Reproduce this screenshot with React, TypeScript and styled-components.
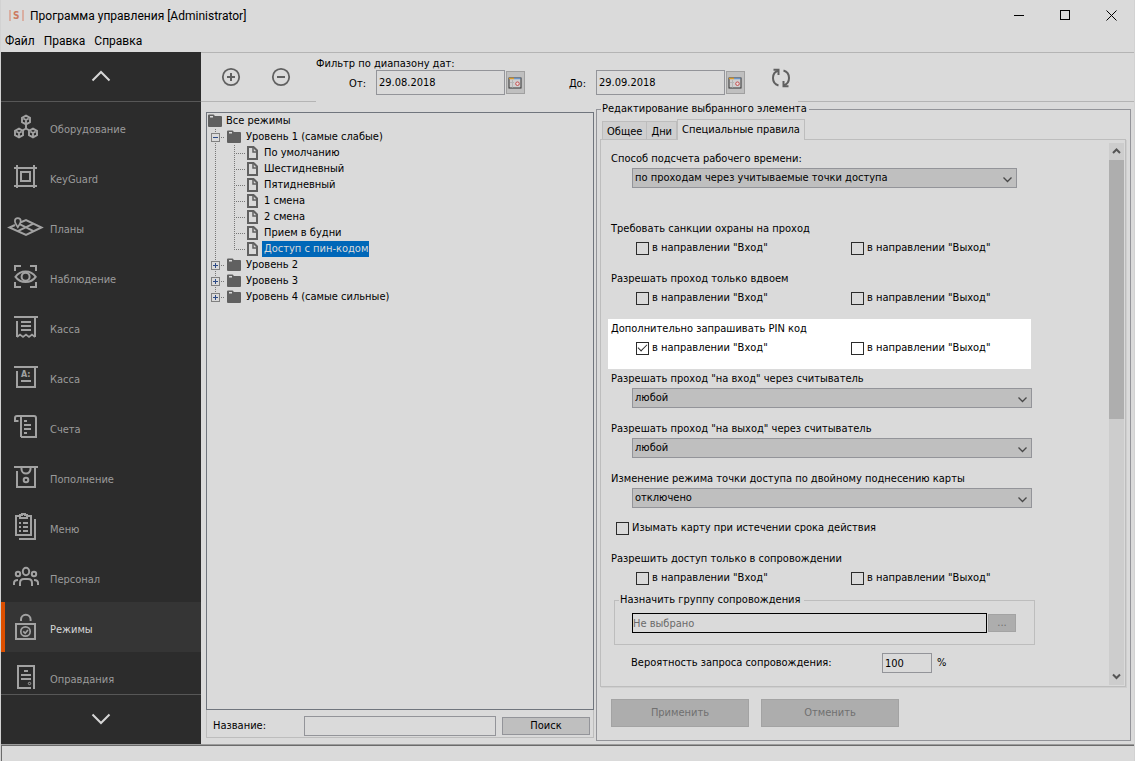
import React, { useState } from 'react';
import styled, { createGlobalStyle, css } from 'styled-components';

const color = {
  face: '#dadada',
  control: '#bfbfbf',
  disabled: '#adadad',
  line: '#b4b4b4',
  softLine: '#bdbdbd',
  frame: '#939499',
  icon: '#606060',
  side: '#2c2c2c',
  sideIcon: '#a2a2a2',
};

const GlobalStyle = createGlobalStyle`
  *, *::before, *::after { box-sizing: border-box; }
  body { margin: 0; background: ${color.face}; }
  body, button, input, select {
    font-family: "DejaVu Sans Condensed", Tahoma, sans-serif;
    font-size: 11px;
    line-height: 14px;
    color: #000;
  }
  button, input, select { border-radius: 0; margin: 0; }
`;

const Window = styled.div`
  display: flex;
  flex-direction: column;
  min-height: 100vh;
  background: ${color.face};
  border-left: 1px solid #d2d2d2;
  border-right: 1px solid #d2d2d2;
`;

/* ---------- title and menu ---------- */

const TitleBar = styled.header`
  display: flex;
  align-items: center;
  height: 31px;
  padding-left: 8px;
`;

const TitleText = styled.h1`
  flex: 1;
  margin: 0 0 0 6px;
  font: 400 12px/16px Roboto, sans-serif;
`;

const WindowButton = styled.button`
  width: 46px;
  height: 30px;
  padding: 0;
  border: 0;
  background: none;
  display: flex;
  align-items: center;
  justify-content: center;
`;

const MenuBar = styled.nav`
  display: flex;
  gap: 9px;
  height: 21px;
  padding: 3px 4px 4px;
`;

const MenuButton = styled.button`
  padding: 0;
  border: 0;
  background: none;
  font: 400 12px/14px Roboto, sans-serif;
`;

/* ---------- sidebar ---------- */

const Body = styled.div`
  flex: 1;
  display: flex;
`;

const Sidebar = styled.aside`
  width: 200px;
  flex: none;
  display: flex;
  flex-direction: column;
  background: ${color.side};
`;

const ScrollStep = styled.button<{ $edge: 'top' | 'bottom' }>`
  height: 50px;
  flex: none;
  padding: 0 1px 1px 0;
  border: 0 solid #575757;
  ${(p) => (p.$edge === 'top' ? 'border-bottom-width: 1px;' : 'border-top-width: 1px;')}
  background: none;
  display: flex;
  align-items: center;
  justify-content: center;
`;

const SideList = styled.ul`
  flex: 1 1 0;
  min-height: 0;
  overflow: hidden;
  margin: 0;
  padding: 0;
  list-style: none;
`;

const SideLink = styled.a<{ $active: boolean }>`
  display: flex;
  align-items: center;
  gap: 8px;
  height: 50px;
  padding: 2px 0 0 5px;
  border-left: 4px solid ${(p) => (p.$active ? '#dc4f00' : 'transparent')};
  background: ${(p) => (p.$active ? '#353535' : 'transparent')};
  color: ${(p) => (p.$active ? '#d6d6d6' : '#9b9b9b')};
  text-decoration: none;

  svg {
    flex: none;
    overflow: visible;
    fill: none;
    stroke: ${color.sideIcon};
    stroke-width: 2;
  }
  span { padding-top: 4px; }
`;

/* ---------- toolbar ---------- */

const Main = styled.main`
  flex: 1;
  min-width: 0;
  display: flex;
  flex-direction: column;
  border-top: 1px solid ${color.line};
`;

const Toolbar = styled.div`
  display: flex;
  height: 49px;
`;

const ToolGroup = styled.div<{ $grow?: boolean }>`
  display: flex;
  align-items: center;
  gap: 20px;
  padding-left: 15px;
  width: 115px;
  border-bottom: 1px solid ${color.line};
  ${(p) => p.$grow && css`flex: 1;`}
`;

const IconButton = styled.button`
  padding: 0;
  width: 30px;
  height: 30px;
  border: 0;
  background: none;
  display: flex;
  align-items: center;
  justify-content: center;
`;

const RefreshButton = styled(IconButton)`
  align-self: center;
`;

const DateFilter = styled.div`
  display: flex;
  width: 482px;
  gap: 21px;
`;

const DateFields = styled.div`
  display: grid;
  grid-template-columns: 60px 149px 71px 149px;
  grid-template-rows: 13px 25px;
  padding-top: 4px;
`;

const FilterTitle = styled.div`
  grid-column: 1 / -1;
  line-height: 13px;
`;

const DateLabel = styled.label`
  justify-self: end;
  align-self: center;
  padding: 2px 10px 0 0;
`;

const DateBox = styled.div`
  display: flex;
  align-items: center;
  gap: 1px;
`;

const DateInput = styled.input`
  flex: 1;
  min-width: 0;
  height: 25px;
  padding: 0 2px;
  border: 1px solid ${color.frame};
  background: ${color.face};
`;

const CalendarButton = styled.button`
  width: 19px;
  height: 23px;
  padding: 0 0 0 1px;
  border: 1px solid #a0a0a0;
  background: ${color.control};
  display: flex;
  align-items: center;
`;

/* ---------- tree ---------- */

const Columns = styled.div`
  flex: 1;
  display: flex;
  gap: 2px;
  padding: 0 3px 3px 5px;
`;

const TreeColumn = styled.section`
  width: 388px;
  flex: none;
  display: flex;
  flex-direction: column;
  padding: 10px 0 3px;
`;

const Tree = styled.div`
  flex: 1;
  border: 1px solid #70757d;
  padding: 0 1px;
`;

const TreeRow = styled.div`
  display: flex;
  align-items: center;
  height: 16px;

  svg { flex: none; }
`;

const TreeText = styled.span<{ $level: number; $selected?: boolean }>`
  height: 16px;
  line-height: 16px;
  margin-left: ${(p) => p.$level + 2}px;
  padding: 0 1px 0 2px;
  ${(p) => p.$selected && css`
    background: #0067b8;
    color: #dadada;
  `}
`;

const SearchBar = styled.form`
  display: flex;
  align-items: center;
  height: 28px;
  padding: 4px 3px 0 6px;
  border: 1px solid ${color.softLine};
  border-top: 0;
`;

const SearchLabel = styled.label`
  width: 91px;
`;

const SearchInput = styled.input`
  flex: 1;
  min-width: 0;
  height: 20px;
  margin-right: 6px;
  border: 1px solid ${color.frame};
  background: ${color.face};
`;

const SearchButton = styled.button`
  width: 88px;
  height: 18px;
  padding: 0;
  border: 1px solid ${color.frame};
  background: ${color.control};
`;

/* ---------- editor ---------- */

const Editor = styled.fieldset`
  flex: 1;
  min-width: 0;
  margin: 0;
  padding: 3px 3px 13px;
  border: 1px solid ${color.frame};
  display: flex;
  flex-direction: column;

  > legend {
    margin-left: 1px;
    padding: 0 2px 0 1px;
  }
`;

const Tabs = styled.div`
  display: flex;
  align-items: flex-end;
  height: 20px;
  padding-left: 2px;
`;

const Tab = styled.button<{ $active: boolean }>`
  height: 18px;
  padding: 2px 4px 0;
  border: 1px solid ${color.softLine};
  border-bottom: 0;
  background: #cfcfcf;
  & + & { border-left: 0; }
  ${(p) => p.$active && css`
    height: 21px;
    margin-bottom: -1px;
    padding: 0 4px 1px;
    background: ${color.face};
    position: relative;
    && { border-left: 1px solid ${color.softLine}; }
  `}
`;

const TabPanel = styled.div`
  flex: 1;
  display: flex;
  margin-right: 1px;
  border: 1px solid ${color.softLine};
  box-shadow: 1px 1px 0 #cecece;
`;

const Form = styled.div`
  flex: 1;
  min-width: 0;
  padding: 9px 77px 13px 7px;
`;

const Rule = styled.section<{ $lit?: boolean; $space?: number }>`
  padding: 0 0 11px 3px;
  margin: 0 ${(p) => (p.$lit ? 1 : 0)}px ${(p) => p.$space ?? 0}px 0;
  background: ${(p) => (p.$lit ? '#fff' : 'transparent')};
`;

const RuleTitle = styled.div`
  height: 19px;
  line-height: 19px;
`;

const Checks = styled.div`
  display: grid;
  grid-template-columns: 215px 1fr;
  padding-left: 25px;
`;

const CheckLabel = styled.label`
  display: flex;
  align-items: center;
  gap: 3px;
  height: 20px;
`;

const CheckInput = styled.input<{ $lit?: boolean }>`
  appearance: none;
  flex: none;
  width: 13px;
  height: 13px;
  border: 1px solid #2b2b2b;
  background: ${(p) => (p.$lit ? '#fff' : color.face)};
  display: grid;
  place-items: center;

  &:checked::before {
    content: '';
    width: 9px;
    height: 5px;
    margin-bottom: 3px;
    border: solid #2b2b2b;
    border-width: 0 0 1px 1px;
    transform: rotate(-45deg);
  }
`;

const SelectBox = styled.div<{ $short?: boolean }>`
  position: relative;
  margin: 0 ${(p) => (p.$short ? 15 : 0)}px 0 21px;

  svg {
    position: absolute;
    right: 5px;
    top: 9px;
    pointer-events: none;
  }
`;

const Select = styled.select`
  appearance: none;
  display: block;
  width: 100%;
  height: 20px;
  padding: 0 20px 0 2px;
  border: 1px solid ${color.frame};
  background: ${color.control};
`;

const SingleCheck = styled.div`
  height: 30px;
  padding-left: 8px;

  label { height: 18px; }
`;

const EscortGroup = styled.fieldset`
  display: flex;
  min-width: 0;
  margin: 0 -3px 8px 6px;
  padding: 6px 18px 11px 17px;
  border: 1px solid ${color.softLine};
  gap: 1px;
  align-items: center;

  > legend {
    margin-left: -13px;
    padding: 0 3px 0 1px;
  }
`;

const EscortInput = styled.input`
  flex: 1;
  min-width: 0;
  height: 20px;
  padding: 0;
  border: 1px solid #000;
  background: ${color.face};
  color: #6a6a6a;
`;

const DisabledButton = styled.button<{ $small?: boolean }>`
  width: ${(p) => (p.$small ? 28 : 138)}px;
  height: ${(p) => (p.$small ? 18 : 28)}px;
  flex: none;
  padding: 0;
  border: 1px solid #a3a3a3;
  background: ${color.disabled};
  color: #707070;
`;

const Probability = styled.div`
  display: flex;
  align-items: center;
  padding-left: 23px;

  label { width: 251px; }
`;

const NumberInput = styled.input`
  width: 50px;
  height: 20px;
  padding: 0 2px;
  margin-right: 5px;
  border: 1px solid ${color.frame};
  background: ${color.face};
`;

const ScrollBar = styled.div`
  width: 15px;
  margin: 3px 1px 1px 0;
  display: flex;
  flex-direction: column;
  background: #cdcdcd;
`;

const ScrollArrow = styled.button`
  height: 17px;
  flex: none;
  padding: 0;
  border: 0;
  background: none;
  display: flex;
  align-items: center;
  justify-content: center;
`;

const ScrollTrack = styled.div`
  flex: 1;
`;

const ScrollThumb = styled.div`
  height: 259px;
  background: #aeaeae;
`;

const Actions = styled.div`
  display: flex;
  gap: 12px;
  padding: 12px 0 0 11px;
`;

const StatusBar = styled.footer`
  height: 17px;
  border-top: 1px solid #9c9c9c;
  box-shadow: inset 1px 1px 0 #6b6b6b;
`;

/* ---------- drawings ---------- */

const hex = (x: number, y: number) =>
  `M${x} ${y - 4.3}L${x + 4} ${y - 2.1}V${y + 2.1}L${x} ${y + 4.3}L${x - 4} ${y + 2.1}V${y - 2.1}ZM${x} ${y + 4}V${y}L${x - 2.6} ${y - 1.5}M${x} ${y}L${x + 2.6} ${y - 1.5}`;

const sideIcons: Record<string, React.ReactNode> = {
  hardware: (
    <g strokeWidth="1.9">
      <path d={hex(16, 8) + hex(9, 21) + hex(23, 21)} />
      <path d="M16 12V16.5L12.5 18.5M16 16.5L19.5 18.5" />
    </g>
  ),
  keyguard: (
    <g strokeWidth="2">
      <path d="M7 3V26M24 3V26M4 6H27M4 24H27" />
      <rect x="11" y="10" width="9" height="9" />
    </g>
  ),
  plans: (
    <g strokeWidth="2">
      <path d="M9 11L16 8L31.5 15.5L16 22.8L-.5 15.5L5 13" />
      <path d="M23.5 11.7L7.8 19.2M8.5 11.7L23.5 19.2" />
      <path d="M7.8 15.2C5.6 12 4.9 10.6 4.9 9A2.9 2.9 0 0 1 10.7 9C10.7 10.6 10 12 7.8 15.2Z" fill={color.side} strokeWidth="1.7" />
    </g>
  ),
  watch: (
    <g>
      <path d="M5 9V4H11M20 4H26V9M26 20V25H20M11 25H5V20" />
      <path d="M5.5 14.8C8 11.3 11.5 9.6 15.6 9.6S23.2 11.3 25.7 14.8C23.2 18.3 19.7 20 15.6 20S8 18.3 5.5 14.8Z" />
      <circle cx="15.6" cy="14.8" r="4" />
    </g>
  ),
  receipt: (
    <g>
      <path d="M4 5H28M25 5V25M7 9V25M11 10H21M11 14H21M11 18H21" />
      <path d="M7 25L10 22.5L13 25L16 22.5L19 25L22 22.5L25 25" strokeWidth="1.7" />
    </g>
  ),
  priceTag: (
    <g>
      <path d="M4 5H28M25 5V25H7V9M11 19H21" />
      <text x="11" y="15" fill={color.sideIcon} stroke="none" fontFamily="DejaVu Sans" fontWeight="700" fontSize="8">A:</text>
    </g>
  ),
  bills: (
    <g>
      <path d="M11 25V4M11 25H26V6Q26 4 24 4H7Q5 4 5 6V9H8.5" />
      <path d="M14 9H17M14 13H21M14 17H21M14 21H17" />
    </g>
  ),
  topUp: (
    <g>
      <path d="M4 5H28M25 5V25H7V9" />
      <path d="M11.5 5V7A4.5 4.5 0 0 0 20.5 7V5" />
      <circle cx="16" cy="18" r="2.3" />
    </g>
  ),
  menu: (
    <g>
      <path d="M10 4H6V23H21V4H17M25 7V27H9" />
      <path d="M10 3H12V2H15V3H17V6H10Z" />
      <path d="M9 11H11M13 11H18M9 15H11M13 15H18M9 19H11M13 19H18" />
    </g>
  ),
  staff: (
    <g>
      <ellipse cx="16" cy="9.5" rx="3.2" ry="3.7" />
      <circle cx="8" cy="12" r="2.2" />
      <circle cx="24" cy="12" r="2.2" />
      <path d="M10 24V21Q10 17 14 17H18Q22 17 22 21V24M4 23V21Q4 18 8 18M28 23V21Q28 18 24 18" />
    </g>
  ),
  modes: (
    <g>
      <rect x="6" y="12" width="19" height="15" />
      <path d="M11 9V7.5A4.8 4.8 0 0 1 20.6 7.5V9" />
      <circle cx="15.5" cy="19.5" r="4.7" strokeWidth="1.7" />
      <path d="M13.2 19.3L15.2 21.2L18 18" strokeWidth="1.7" />
    </g>
  ),
  excuses: (
    <g>
      <path d="M21 26H8V4H24V27M14 9H18M11 13H21M11 17H21" />
      <circle cx="19.5" cy="21.5" r="1.2" strokeWidth="1" />
    </g>
  ),
};

const Chevron = ({ up }: { up?: boolean }) => (
  <svg width="20" height="12" viewBox="0 0 20 12" fill="none" stroke="#d6d6d6" strokeWidth="2">
    <path d={up ? 'M1.5 10.5L10 2L18.5 10.5' : 'M1.5 1.5L10 10L18.5 1.5'} />
  </svg>
);

const ScrollChevron = ({ up }: { up?: boolean }) => (
  <svg width="9" height="7" viewBox="0 0 9 7" fill="none" stroke="#555" strokeWidth="2">
    <path d={up ? 'M1 5L4.5 1.5L8 5' : 'M1 1.5L4.5 5L8 1.5'} />
  </svg>
);

const Calendar = () => (
  <svg width="14" height="12" viewBox="0 0 14 12">
    <rect x="1" y="1" width="12" height="10" fill="#cfcfcf" stroke="#333" />
    <path d="M1 1.5H6" stroke="#d99a2b" strokeWidth="1.5" />
    <path d="M6 1.5H12.5" stroke="#6d95c4" strokeWidth="1.5" />
    <path d="M4.5 3V10.5M2 5.5H6" stroke="#b5b5b5" />
    <circle cx="9.5" cy="6.7" r="1.8" fill="#e6dada" stroke="#c4504f" />
  </svg>
);

const Refresh = () => (
  <svg width="20" height="20" viewBox="0 0 20 20" fill="none" stroke={color.icon} strokeWidth="2">
    <path d="M7.5 2.5C4 3.5 2 6.5 2 10C2 13.5 4 16.5 7.5 17.5" />
    <path d="M2.5 1.8H7.5V7" />
    <path d="M12.5 2.5C16 3.5 18 6.5 18 10C18 13.5 16 16.5 12.5 17.5" />
    <path d="M17.5 18.2H12.5V13" />
  </svg>
);

const Folder = () => (
  <svg width="14" height="14" viewBox="0 0 14 14" fill={color.icon}>
    <path d="M0 1.500Q0 .5 1 .5H5.500Q6.500 .5 6.700 2H13Q14 2 14 3V12Q14 13 13 13H1Q0 13 0 12Z" />
    <path d="M2 2H5V3.500H2Z" fill={color.face} />
  </svg>
);

const Page = () => (
  <svg width="11" height="14" viewBox="0 0 11 14" fill="none" stroke={color.icon} strokeWidth="2">
    <path d="M1 1H6.5L10 4.5V13H1Z" />
    <path d="M6 1V6H10" strokeWidth="1.5" />
  </svg>
);

const Guide = ({ width, upTo, branch, toggle }: { width: number; upTo: number; branch?: boolean; toggle?: string }) => (
  <svg width={width} height="16" viewBox={`0 0 ${width} 16`} shapeRendering="crispEdges">
    {upTo > 0 && <path d={`M7.5 0V${upTo}`} stroke="#777" strokeDasharray="1 1" />}
    {branch && <path d={`M7 8.5H${width - 2}`} stroke="#777" strokeDasharray="1 1" />}
    {toggle && (
      <>
        <rect x="3.5" y="4.5" width="8" height="8" fill={color.face} stroke="#808080" />
        <path d={toggle === '+' ? 'M5 8.5H10M7.5 6V11' : 'M5 8.5H10'} stroke="#2c4a86" />
      </>
    )}
  </svg>
);

/* ---------- data ---------- */

const sections: [string, string][] = [
  ['hardware', 'Оборудование'],
  ['keyguard', 'KeyGuard'],
  ['plans', 'Планы'],
  ['watch', 'Наблюдение'],
  ['receipt', 'Касса'],
  ['priceTag', 'Касса'],
  ['bills', 'Счета'],
  ['topUp', 'Пополнение'],
  ['menu', 'Меню'],
  ['staff', 'Персонал'],
  ['modes', 'Режимы'],
  ['excuses', 'Оправдания'],
];

const levelOneModes = ['По умолчанию', 'Шестидневный', 'Пятидневный', '1 смена', '2 смена', 'Прием в будни', 'Доступ с пин-кодом'];
const otherLevels = ['Уровень 2', 'Уровень 3', 'Уровень 4 (самые сильные)'];
const tabNames = ['Общее', 'Дни', 'Специальные правила'];

/* ---------- parts ---------- */

function Check({ text, checked, lit }: { text: string; checked?: boolean; lit?: boolean }) {
  return (
    <CheckLabel>
      <CheckInput type="checkbox" defaultChecked={checked} $lit={lit} />
      {text}
    </CheckLabel>
  );
}

function DirectionRule({ title, entry, lit, last }: { title: string; entry?: boolean; lit?: boolean; last?: boolean }) {
  return (
    <Rule $lit={lit} $space={last ? -6 : 0}>
      <RuleTitle>{title}</RuleTitle>
      <Checks>
        <Check text={'в направлении "Вход"'} checked={entry} lit={lit} />
        <Check text={'в направлении "Выход"'} lit={lit} />
      </Checks>
    </Rule>
  );
}

function SelectRule({ id, title, value, first }: { id: string; title: string; value: string; first?: boolean }) {
  return (
    <Rule $space={first ? 20 : 0}>
      <RuleTitle>
        <label htmlFor={id}>{title}</label>
      </RuleTitle>
      <SelectBox $short={first}>
        <Select id={id} defaultValue={value}>
          <option>{value}</option>
        </Select>
        <svg width="9" height="6" viewBox="0 0 9 6" fill="none" stroke="#484848" strokeWidth="1.3">
          <path d="M.5 .5L4.5 4.5L8.5 .5" />
        </svg>
      </SelectBox>
    </Rule>
  );
}

function DateField({ id, label, value }: { id: string; label: string; value: string }) {
  return (
    <>
      <DateLabel htmlFor={id}>{label}</DateLabel>
      <DateBox>
        <DateInput id={id} defaultValue={value} />
        <CalendarButton type="button" aria-label="Календарь">
          <Calendar />
        </CalendarButton>
      </DateBox>
    </>
  );
}

export default function App() {
  const [tab, setTab] = useState(2);
  return (
    <>
      <GlobalStyle />
      <Window>
        <TitleBar>
          <svg width="15" height="14" viewBox="0 0 15 14">
            <path d="M1 1V12M14 1V12" stroke="#d9a08e" strokeWidth="1.5" />
            <text x="4" y="10" fontFamily="DejaVu Sans Condensed" fontSize="10" fontWeight="700" fill="#cc7a60">S</text>
          </svg>
          <TitleText>Программа управления [Administrator]</TitleText>
          <WindowButton aria-label="Свернуть">
            <svg width="11" height="11" viewBox="0 0 11 11"><path d="M0 5.5H10" stroke="#000" /></svg>
          </WindowButton>
          <WindowButton aria-label="Развернуть">
            <svg width="11" height="11" viewBox="0 0 11 11"><rect x=".5" y=".5" width="9" height="9" fill="none" stroke="#000" /></svg>
          </WindowButton>
          <WindowButton aria-label="Закрыть">
            <svg width="11" height="11" viewBox="0 0 11 11"><path d="M.5 .5L10.5 10.5M10.5 .5L.5 10.5" stroke="#000" /></svg>
          </WindowButton>
        </TitleBar>
        <MenuBar>
          <MenuButton>Файл</MenuButton>
          <MenuButton>Правка</MenuButton>
          <MenuButton>Справка</MenuButton>
        </MenuBar>

        <Body>
          <Sidebar>
            <ScrollStep $edge="top" aria-label="Вверх"><Chevron up /></ScrollStep>
            <SideList>
              {sections.map(([icon, label]) => (
                <li key={icon}>
                  <SideLink href="#" $active={icon === 'modes'}>
                    <svg width="32" height="32" viewBox="0 0 32 32">{sideIcons[icon]}</svg>
                    <span>{label}</span>
                  </SideLink>
                </li>
              ))}
            </SideList>
            <ScrollStep $edge="bottom" aria-label="Вниз"><Chevron /></ScrollStep>
          </Sidebar>

          <Main>
            <Toolbar>
              <ToolGroup>
                <IconButton aria-label="Добавить">
                  <svg width="20" height="20" viewBox="0 0 20 20" fill="none" stroke={color.icon} strokeWidth="2">
                    <circle cx="10" cy="10" r="8.2" strokeWidth="1.8" /><path d="M6 10H14M10 6V14" />
                  </svg>
                </IconButton>
                <IconButton aria-label="Удалить">
                  <svg width="20" height="20" viewBox="0 0 20 20" fill="none" stroke={color.icon} strokeWidth="2">
                    <circle cx="10" cy="10" r="8.2" strokeWidth="1.8" /><path d="M6 10H14" />
                  </svg>
                </IconButton>
              </ToolGroup>
              <DateFilter>
                <DateFields>
                  <FilterTitle>Фильтр по диапазону дат:</FilterTitle>
                  <DateField id="from" label="От:" value="29.08.2018" />
                  <DateField id="to" label="До:" value="29.09.2018" />
                </DateFields>
                <RefreshButton aria-label="Обновить"><Refresh /></RefreshButton>
              </DateFilter>
              <ToolGroup $grow />
            </Toolbar>

            <Columns>
              <TreeColumn>
                <Tree>
                  <TreeRow><Folder /><TreeText $level={0}>Все режимы</TreeText></TreeRow>
                  <TreeRow>
                    <Guide width={19} upTo={16} branch toggle="-" />
                    <Folder />
                    <TreeText $level={1}>Уровень 1 (самые слабые)</TreeText>
                  </TreeRow>
                  {levelOneModes.map((name, i) => {
                    const last = i === levelOneModes.length - 1;
                    return (
                      <TreeRow key={name}>
                        <Guide width={19} upTo={16} />
                        <Guide width={20} upTo={last ? 9 : 16} branch />
                        <Page />
                        <TreeText $level={2} $selected={last}>{name}</TreeText>
                      </TreeRow>
                    );
                  })}
                  {otherLevels.map((name, i) => (
                    <TreeRow key={name}>
                      <Guide width={19} upTo={i === otherLevels.length - 1 ? 9 : 16} branch toggle="+" />
                      <Folder />
                      <TreeText $level={1}>{name}</TreeText>
                    </TreeRow>
                  ))}
                </Tree>
                <SearchBar>
                  <SearchLabel htmlFor="name">Название:</SearchLabel>
                  <SearchInput id="name" />
                  <SearchButton type="button">Поиск</SearchButton>
                </SearchBar>
              </TreeColumn>

              <Editor>
                <legend>Редактирование выбранного элемента</legend>
                <Tabs role="tablist">
                  {tabNames.map((name, i) => (
                    <Tab key={name} role="tab" type="button" aria-selected={tab === i} $active={tab === i} onClick={() => setTab(i)}>
                      {name}
                    </Tab>
                  ))}
                </Tabs>
                <TabPanel role="tabpanel">
                  <Form>
                    <SelectRule first id="worktime" title="Способ подсчета рабочего времени:" value="по проходам через учитываемые точки доступа" />
                    <DirectionRule title="Требовать санкции охраны на проход" />
                    <DirectionRule title="Разрешать проход только вдвоем" />
                    <DirectionRule title="Дополнительно запрашивать PIN код" entry lit />
                    <SelectRule id="reader-in" title={'Разрешать проход "на вход" через считыватель'} value="любой" />
                    <SelectRule id="reader-out" title={'Разрешать проход "на выход" через считыватель'} value="любой" />
                    <SelectRule id="double" title="Изменение режима точки доступа по двойному поднесению карты" value="отключено" />
                    <SingleCheck>
                      <Check text="Изымать карту при истечении срока действия" />
                    </SingleCheck>
                    <DirectionRule last title="Разрешить доступ только в сопровождении" />
                    <EscortGroup>
                      <legend>Назначить группу сопровождения</legend>
                      <EscortInput aria-label="Группа сопровождения" readOnly value="Не выбрано" />
                      <DisabledButton $small disabled>...</DisabledButton>
                    </EscortGroup>
                    <Probability>
                      <label htmlFor="probability">Вероятность запроса сопровождения:</label>
                      <NumberInput id="probability" defaultValue="100" />
                      %
                    </Probability>
                  </Form>
                  <ScrollBar>
                    <ScrollArrow aria-label="Прокрутить вверх"><ScrollChevron up /></ScrollArrow>
                    <ScrollTrack><ScrollThumb /></ScrollTrack>
                    <ScrollArrow aria-label="Прокрутить вниз"><ScrollChevron /></ScrollArrow>
                  </ScrollBar>
                </TabPanel>
                <Actions>
                  <DisabledButton disabled>Применить</DisabledButton>
                  <DisabledButton disabled>Отменить</DisabledButton>
                </Actions>
              </Editor>
            </Columns>
          </Main>
        </Body>
        <StatusBar />
      </Window>
    </>
  );
}
